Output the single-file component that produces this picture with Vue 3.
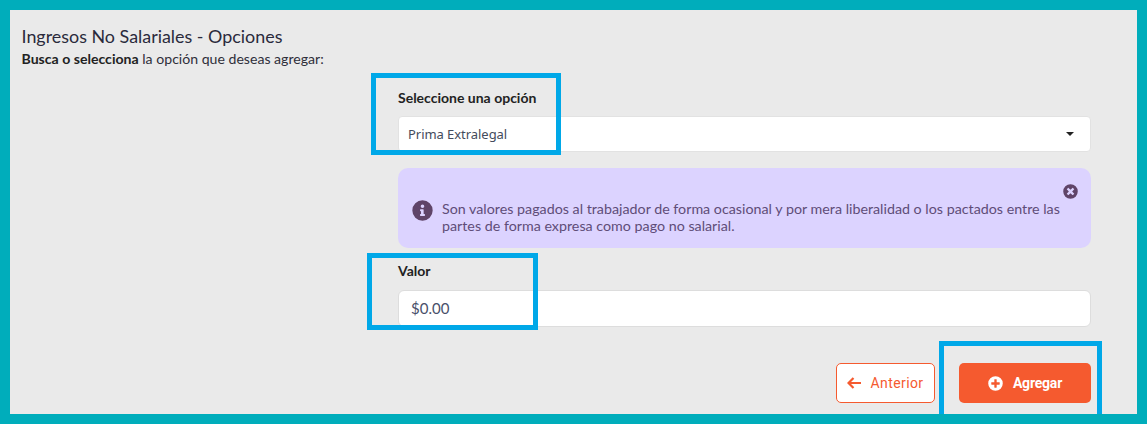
<script setup>
const marks = ['m1', 'm2', 'm3']
</script>

<template>
  <div class="frame">
    <h1 class="title">Ingresos No Salariales - Opciones</h1>
    <p class="sub"><b>Busca o selecciona</b> la opción que deseas agregar:</p>
    <div class="form">
      <label class="lab first">Seleccione una opción</label>
      <div class="select">
        <span>Prima Extralegal</span>
        <i class="caret"></i>
      </div>
      <div class="alert">
        <svg class="info" viewBox="0 0 512 512" width="21" height="21"><path fill="#5f4468" d="M256 8a248 248 0 1 0 0 496 248 248 0 0 0 0-496zm0 102a44 44 0 1 1 0 88 44 44 0 0 1 0-88zm60 266c0 7-5 12-12 12h-96c-7 0-12-5-12-12v-24c0-7 5-12 12-12h12v-64h-12c-7 0-12-5-12-12v-24c0-7 5-12 12-12h64c7 0 12 5 12 12v100h20c7 0 12 5 12 12z"/></svg>
        <p>Son valores pagados al trabajador de forma ocasional y por mera liberalidad o los pactados entre las partes de forma expresa como pago no salarial.</p>
        <svg class="close" viewBox="0 0 512 512" width="15" height="15"><path fill="#5f4468" d="M256 8a248 248 0 1 0 0 496 248 248 0 0 0 0-496zm121 313c5 5 5 12 0 17l-39 39c-5 5-12 5-17 0l-65-65-65 65c-5 5-12 5-17 0l-39-39c-5-5-5-12 0-17l65-65-65-65c-5-5-5-12 0-17l39-39c5-5 12-5 17 0l65 65 65-65c5-5 12-5 17 0l39 39c5 5 5 12 0 17l-65 65z"/></svg>
      </div>
      <label class="lab second">Valor</label>
      <div class="input">$0.00</div>
      <div class="actions">
        <button class="btn ghost">
          <svg viewBox="0 0 14 12" width="14" height="12"><path d="M6.5 1 1.5 6l5 5M2 6h12" fill="none" stroke="#f55a2f" stroke-width="2.2"/></svg>
          Anterior
        </button>
        <button class="btn solid">
          <svg viewBox="0 0 512 512" width="15" height="15"><path fill="#fff" d="M256 8a248 248 0 1 0 0 496 248 248 0 0 0 0-496zm144 276c0 7-5 12-12 12h-92v92c0 7-5 12-12 12h-56c-7 0-12-5-12-12v-92h-92c-7 0-12-5-12-12v-56c0-7 5-12 12-12h92v-92c0-7 5-12 12-12h56c7 0 12 5 12 12v92h92c7 0 12 5 12 12z"/></svg>
          Agregar
        </button>
      </div>
    </div>
    <div v-for="m in marks" :key="m" class="mark" :class="m"></div>
  </div>
</template>

<style scoped>
.frame {
  position: relative;
  box-sizing: border-box;
  width: 1147px;
  height: 424px;
  padding: 15px 46px 0 11.5px;
  border: 10px solid #00adbb;
  background: #eaeaea;
  font-family: Lato, sans-serif;
  color: #2f2f3a;
  overflow: hidden;
}
.title {
  margin: 0;
  font-size: 17.9px;
  line-height: 22px;
  font-weight: 400;
  color: #2a2a3c;
}
.sub {
  margin: 3px 0 0;
  font-size: 14.1px;
  line-height: 17px;
}
.sub b { color: #222; }
.form {
  margin-left: 376.5px;
  width: 693px;
}
.lab {
  display: block;
  font-size: 14px;
  font-weight: 700;
  line-height: 18px;
  color: #222;
}
.first { margin-top: 22px; }
.select {
  display: flex;
  align-items: center;
  justify-content: space-between;
  box-sizing: border-box;
  height: 36px;
  margin-top: 9px;
  padding: 0 16px 0 9px;
  background: #fff;
  border: 1px solid #e2e2e2;
  border-radius: 4px;
  font-size: 13px;
  font-family: "Noto Sans", sans-serif;
  letter-spacing: -.05px;
  color: #444b5c;
}
.caret {
  width: 0;
  height: 0;
  border-left: 4.5px solid transparent;
  border-right: 4.5px solid transparent;
  border-top: 4.5px solid #222;
}
.alert {
  position: relative;
  display: flex;
  align-items: flex-start;
  box-sizing: border-box;
  height: 80px;
  margin-top: 16px;
  padding: 32px 26px 0 14px;
  background: #dcd3ff;
  border-radius: 10px;
  color: #5f4d78;
}
.alert p {
  margin: 0 0 0 9px;
  font-size: 14.27px;
  line-height: 17px;
}
.info { flex: none; margin-top: 0; }
.close {
  position: absolute;
  top: 16px;
  right: 13px;
}
.second { margin-top: 14px; }
.input {
  box-sizing: border-box;
  height: 37px;
  margin-top: 10px;
  padding: 0 12px;
  line-height: 35px;
  background: #fff;
  border: 1px solid #ddd;
  border-radius: 6px;
  font-size: 15px;
  color: #49506a;
}
.actions {
  display: flex;
  justify-content: flex-end;
  gap: 24px;
  margin-top: 36px;
}
.btn {
  display: flex;
  align-items: center;
  justify-content: center;
  box-sizing: border-box;
  height: 40px;
  border-radius: 5px;
  font-family: Roboto, sans-serif;
  font-size: 14px;
  padding: 0;
}
.ghost {
  width: 99px;
  gap: 10px;
  padding-right: 1px;
  background: #fff;
  border: 1px solid #f55a2f;
  color: #f55a2f;
  letter-spacing: .4px;
}
.solid {
  width: 132px;
  gap: 10px;
  background: #f55a2f;
  border: 0;
  color: #fff;
  font-weight: 700;
  font-size: 14px;
  letter-spacing: -.2px;
}
.mark {
  position: absolute;
  box-sizing: border-box;
  border: 5px solid #00a8e8;
}
.m1 { left: 361px; top: 63px; width: 190px; height: 82px; }
.m2 { left: 357px; top: 243px; width: 171px; height: 77px; }
.m3 { left: 929px; top: 331px; width: 163px; height: 80px; }
</style>
